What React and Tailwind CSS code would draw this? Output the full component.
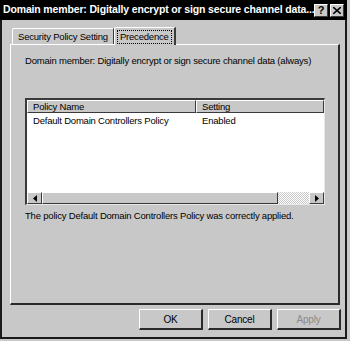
import React from "react";

const raised =
  "border border-t-white border-l-white border-r-[#3a3a3a] border-b-[#3a3a3a]";

const txt = "text-[9.5px] tracking-[-0.2px] text-black leading-[12px]";

function TitleButton({ children }) {
  return (
    <div
      className={`flex items-center justify-center w-[14px] h-[13px] bg-[#c8c8c8] ${raised} text-black text-[11px] font-bold leading-none`}
    >
      {children}
    </div>
  );
}

function Button({ children, disabled }) {
  return (
    <button
      className={`w-[64px] h-[21px] bg-[#c8c8c8] border-t border-l border-t-white border-l-white border-r-2 border-b-2 border-r-[#2a2a2a] border-b-[#2a2a2a] text-[10px] tracking-[-0.2px] ${
        disabled ? "text-[#8a8a8a]" : "text-black"
      }`}
    >
      {children}
    </button>
  );
}

function ArrowButton({ dir }) {
  return (
    <div
      className={`flex items-center justify-center w-[15px] h-full bg-[#c8c8c8] ${raised}`}
    >
      <svg width="4" height="7" viewBox="0 0 4 7">
        {dir === "left" ? (
          <path d="M4 0 L0 3.5 L4 7 Z" fill="#000" />
        ) : (
          <path d="M0 0 L4 3.5 L0 7 Z" fill="#000" />
        )}
      </svg>
    </div>
  );
}

export default function App() {
  return (
    <div
      className="w-[350px] h-[341px] bg-[#c8c8c8] overflow-hidden"
      style={{ fontFamily: '"Liberation Sans", Arial, sans-serif' }}
    >
      <div className="w-[347px] h-[339px] flex flex-col border-l-2 border-r-2 border-b-2 border-[#1a1a1a] bg-[#c8c8c8]">
        {/* title bar */}
        <div className="h-[20px] bg-black flex items-center pl-[3px] pr-[1px] -mr-[2px] -ml-[2px]">
          <span className="text-white font-bold text-[10.5px] flex-1 min-w-0 overflow-hidden whitespace-nowrap tracking-[-0.15px]">
            Domain member: Digitally encrypt or sign secure channel data...
          </span>
          <div className="flex gap-[2px] pr-[2px] shrink-0">
            <TitleButton>?</TitleButton>
            <TitleButton>
              <svg width="8" height="7" viewBox="0 0 8 7">
                <path d="M0 0 L8 7 M8 0 L0 7" stroke="#000" strokeWidth="1.6" />
              </svg>
            </TitleButton>
          </div>
        </div>

        {/* tabs */}
        <div className="flex items-end pl-[10px] pt-[7px] h-[24px]">
          <div className={`h-[16px] px-[5px] flex items-center border-t border-l border-white border-r border-r-[#3a3a3a] rounded-tl-[2px] ${txt}`}>
            Security Policy Setting
          </div>
          <div className={`h-[18px] -mb-px relative z-10 bg-[#c8c8c8] px-[2px] flex items-center border-t border-l border-white border-r-2 border-r-[#3a3a3a] rounded-tl-[2px] ${txt}`}>
            <span className="border border-dotted border-black px-[2px] leading-[12px]">
              Precedence
            </span>
          </div>
        </div>

        {/* panel */}
        <div className="ml-[8px] mr-[5px] h-[261px] border-t border-l border-white border-r-2 border-b-2 border-r-[#2a2a2a] border-b-[#2a2a2a] px-[14px] pt-[10px] flex flex-col">
          <div className={`${txt} whitespace-nowrap`}>
            Domain member: Digitally encrypt or sign secure channel data (always)
          </div>

          <div className="mt-[31px] w-[300px] h-[107px] bg-white border-t-2 border-l-2 border-t-[#3a3a3a] border-l-[#3a3a3a] border-b border-r border-b-[#e8e8e8] border-r-[#e8e8e8] flex flex-col">
            <div className={`flex h-[13px] bg-[#c8c8c8] ${txt}`}>
              <div className={`w-[169px] pl-[5px] ${raised}`}>Policy Name</div>
              <div className={`flex-1 pl-[5px] ${raised}`}>Setting</div>
            </div>
            <div className={`flex ${txt} pt-[2px]`}>
              <div className="w-[169px] pl-[6px] whitespace-nowrap">
                Default Domain Controllers Policy
              </div>
              <div className="pl-[6px]">Enabled</div>
            </div>
            <div className="flex-1" />
            <div className="flex h-[12px]">
              <ArrowButton dir="left" />
              <div className={`w-[236px] bg-[#c8c8c8] ${raised}`} />
              <div className="flex-1 bg-[repeating-conic-gradient(#ffffff_0_25%,#c8c8c8_0_50%)] bg-[length:2px_2px]" />
              <ArrowButton dir="right" />
            </div>
          </div>

          <div className={`mt-[5px] ${txt} whitespace-nowrap`}>
            The policy Default Domain Controllers Policy was correctly applied.
          </div>
        </div>

        {/* buttons */}
        <div className="flex justify-end gap-[5px] pr-[4px] pt-[4px]">
          <Button>OK</Button>
          <Button>Cancel</Button>
          <Button disabled>Apply</Button>
        </div>
      </div>
    </div>
  );
}
